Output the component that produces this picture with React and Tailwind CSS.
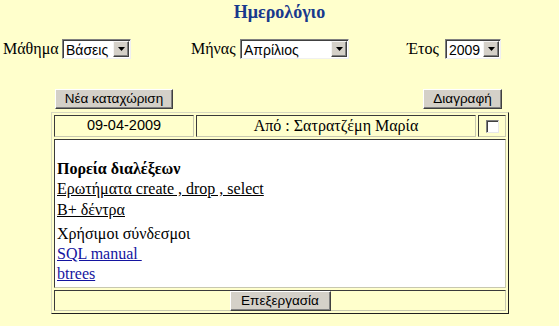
import React from 'react'

const serif = { fontFamily: '"Liberation Serif", "Times New Roman", serif' }

function Select({ value, width }) {
  return (
    <div
      className={`flex h-[20px] items-center border border-t-[#808080] border-l-[#808080] border-b-[#f0f0f0] border-r-[#f0f0f0] bg-white shadow-[inset_1px_1px_0_#404040] ${width}`}
    >
      <span className="flex-1 pl-[3px] pt-[1px] text-[14px] leading-none text-black font-['Liberation_Sans',Arial,sans-serif]">
        {value}
      </span>
      <span className="mr-[1px] flex h-[16px] w-[16px] items-center justify-center border border-t-[#f4f4f4] border-l-[#f4f4f4] border-b-[#404040] border-r-[#404040] bg-[#d4d0c8] shadow-[inset_-1px_-1px_0_#808080]">
        <svg width="7" height="4" viewBox="0 0 7 4">
          <path d="M0 0h7L3.5 4z" fill="#000" />
        </svg>
      </span>
    </div>
  )
}

function Button({ children, width }) {
  return (
    <button
      className={`h-[20px] border border-t-white border-l-white border-b-[#404040] border-r-[#404040] bg-[#d4d0c8] shadow-[inset_-1px_-1px_0_#808080] text-[13.5px] leading-none text-black font-['Liberation_Sans',Arial,sans-serif] ${width}`}
    >
      {children}
    </button>
  )
}

const cell = 'border border-t-[#3a3a3a] border-l-[#3a3a3a] border-b-[#c8c8b0] border-r-[#c8c8b0]'

export default function App() {
  return (
    <div className="h-[326px] w-[559px] overflow-hidden bg-[#ffffcc] text-black" style={serif}>
      {/* Title */}
      <h1 className="pt-[2px] text-center text-[18px] font-bold leading-[21px] text-[#18398c]">
        Ημερολόγιο
      </h1>

      {/* Filters */}
      <div className="mt-[16px] flex h-[20px] items-center text-[16px]">
        <span className="ml-[3px] w-[59px]">Μάθημα</span>
        <Select value="Βάσεις" width="w-[69px]" />
        <span className="ml-[60px] w-[49px]">Μήνας</span>
        <Select value="Απρίλιος" width="w-[109px]" />
        <span className="ml-[58px] w-[38px]">Έτος</span>
        <Select value="2009" width="w-[56px]" />
      </div>

      {/* Actions */}
      <div className="mt-[29px] flex h-[20px] items-center">
        <div className="ml-[55px]">
          <Button width="w-[118px]">Νέα καταχώριση</Button>
        </div>
        <div className="ml-auto mr-[57px]">
          <Button width="w-[79px]">Διαγραφή</Button>
        </div>
      </div>

      {/* Entry table */}
      <div className="ml-[51px] mt-[4px] flex w-[458px] flex-col gap-[2px] border border-t-[#d8d8c0] border-l-[#d8d8c0] border-b-[#202020] border-r-[#202020] p-[2px]">
        <div className="flex h-[22px] gap-[2px]">
          <div className={`${cell} flex w-[140px] items-center justify-center text-[14.5px] font-['Liberation_Sans',Arial,sans-serif]`}>
            09-04-2009
          </div>
          <div className={`${cell} flex flex-1 items-center justify-center text-[16px]`}>
            Από : Σατρατζέμη Μαρία
          </div>
          <div className={`${cell} flex w-[28px] items-center justify-center`}>
            <span className="h-[13px] w-[13px] border border-t-[#808080] border-l-[#808080] border-b-[#e8e8e8] border-r-[#e8e8e8] bg-white shadow-[inset_1px_1px_0_#404040]" />
          </div>
        </div>

        <div className={`${cell} h-[149px] bg-white pl-[2px] pt-[19px] text-[16px]`}>
          <div className="h-[20px] leading-[20px] font-bold">Πορεία διαλέξεων</div>
          <div className="h-[21px] leading-[20px]">
            <a className="underline">Ερωτήματα create , drop , select</a>
          </div>
          <div className="h-[24px] leading-[20px]">
            <a className="underline">B+ δέντρα</a>
          </div>
          <div className="h-[20px] leading-[20px]">Χρήσιμοι σύνδεσμοι</div>
          <div className="h-[20px] leading-[20px]">
            <a className="text-[#1414a0] underline">SQL manual&nbsp;</a>
          </div>
          <div className="h-[20px] leading-[20px]">
            <a className="text-[#1414a0] underline">btrees</a>
          </div>
        </div>

        <div className={`${cell} flex h-[21px] items-center justify-center`}>
          <Button width="w-[101px]">Επεξεργασία</Button>
        </div>
      </div>
    </div>
  )
}
